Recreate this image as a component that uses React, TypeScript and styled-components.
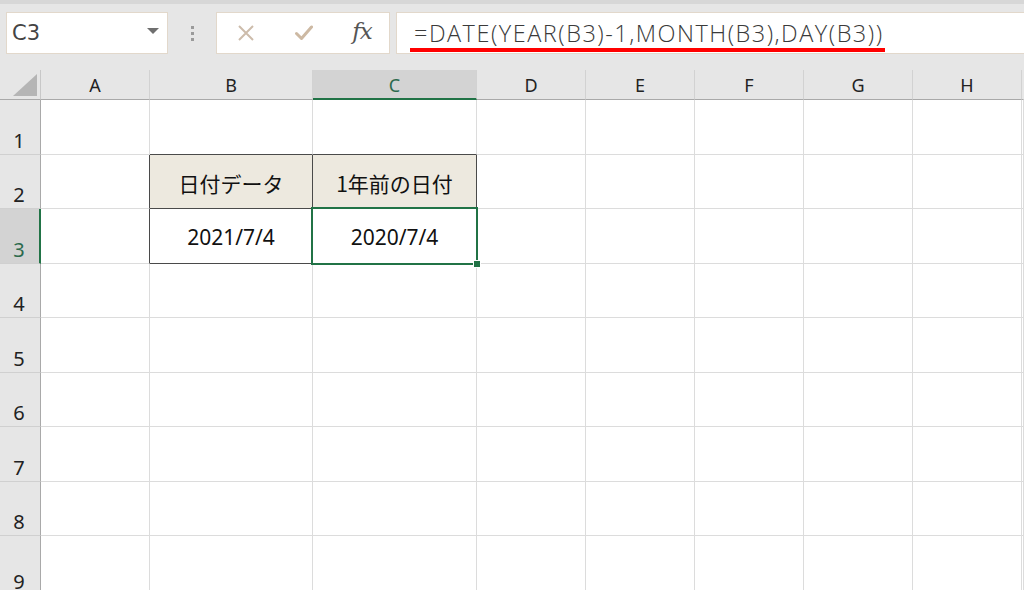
import React from 'react';
import styled, { createGlobalStyle } from 'styled-components';

const Global = createGlobalStyle`
  html, body { margin: 0; padding: 0; background: #ffffff; overflow: hidden; }
  body { font-family: "Noto Sans", "Noto Sans CJK JP", sans-serif; }
  #root { width: 1024px; height: 590px; }
`;

const GREEN = '#217346';
const GRID = '#dcdcdc';
const DARK = '#4a4a4a';

const Page = styled.div`
  width: 1024px;
  height: 590px;
  display: flex;
  flex-direction: column;
  overflow: hidden;
`;

const TopBar = styled.div`
  flex: none;
  height: 70px;
  box-sizing: border-box;
  background: #e6e6e6;
  border-top: 4px solid #d7d7d7;
  display: flex;
  align-items: flex-start;
  padding: 8px 0 0 6px;
`;

const Box = styled.div<{ $w?: number; $grow?: boolean }>`
  box-sizing: border-box;
  height: 42px;
  width: ${p => (p.$w ? `${p.$w}px` : 'auto')};
  flex: ${p => (p.$grow ? '1 1 auto' : 'none')};
  background: #ffffff;
  border: 1px solid #e2d8cb;
  border-right: ${p => (p.$grow ? 'none' : '1px solid #e2d8cb')};
  display: flex;
  align-items: center;
`;

const NameText = styled.span`
  font-family: "DejaVu Sans", sans-serif;
  font-size: 21px;
  color: #444444;
  padding-left: 5px;
  flex: 1;
`;

const Caret = styled.span`
  width: 0;
  height: 0;
  border-left: 6px solid transparent;
  border-right: 6px solid transparent;
  border-top: 6px solid #6f6f6f;
  margin-right: 8px;
  margin-top: -4px;
`;

const Grip = styled.div`
  width: 48px;
  height: 42px;
  flex: none;
  display: flex;
  flex-direction: column;
  align-items: center;
  justify-content: center;
  gap: 3px;
`;

const GripDot = styled.span`
  width: 3px;
  height: 3px;
  background: #9a9a9a;
`;

const FxGrid = styled.div`
  display: grid;
  grid-template-columns: 58px 58px 58px;
  align-items: center;
  justify-items: center;
  width: 100%;
`;

const FxText = styled.span`
  font-family: "DejaVu Serif", "Liberation Serif", serif;
  font-style: italic;
  font-size: 23px;
  color: #555555;
  letter-spacing: -1px;
  margin-top: -4px;
`;

const Gap = styled.div`
  width: 6px;
  flex: none;
`;

const FormulaWrap = styled.div`
  align-self: stretch;
  display: flex;
  align-items: flex-end;
  padding-left: 13px;
`;

const Formula = styled.span`
  font-family: "Open Sans", "Noto Sans", sans-serif;
  font-weight: 300;
  font-size: 23.5px;
  letter-spacing: 1.5px;
  color: #3a3a3a;
  line-height: 26px;
  padding: 0 1px 2px 4px;
  border-bottom: 4px solid #ff0000;
  margin-bottom: 1px;
`;

const Sheet = styled.div`
  display: grid;
  grid-template-columns: 41px 109px 163px 164px 109px 109px 109px 109px 109px 2px;
  grid-template-rows: 30px 55px 54px 55px 54px 55px 54px 55px 54px 60px;
  background: #ffffff;
`;

const ColHead = styled.div<{ $sel?: boolean; $first?: boolean }>`
  box-sizing: border-box;
  background: ${p => (p.$sel ? '#d3d3d3' : '#e6e6e6')};
  border-right: 1px solid ${p => (p.$first ? '#e6e6e6' : '#d2d2d2')};
  border-bottom: ${p => (p.$sel ? `2px solid ${GREEN}` : '1px solid #a9a9a9')};
  display: flex;
  align-items: center;
  justify-content: center;
  font-family: "Noto Sans", sans-serif;
  font-size: 18px;
  color: ${p => (p.$sel ? '#2c6a4d' : '#222222')};
  padding-top: ${p => (p.$sel ? '1px' : '0')};
`;

const Corner = styled.div`
  box-sizing: border-box;
  background: #e6e6e6;
  border-right: 1px solid #c8c8c8;
  border-bottom: 1px solid #a9a9a9;
  display: flex;
  align-items: flex-end;
  justify-content: flex-end;
  padding: 0 3px 3px 0;
`;

const RowHead = styled.div<{ $sel?: boolean }>`
  box-sizing: border-box;
  background: ${p => (p.$sel ? '#d3d3d3' : '#e6e6e6')};
  border-right: ${p => (p.$sel ? `2px solid ${GREEN}` : '1px solid #a9a9a9')};
  border-bottom: 1px solid #d0d0d0;
  display: flex;
  align-items: flex-end;
  justify-content: center;
  padding-bottom: 3px;
  padding-right: ${p => (p.$sel ? '1px' : '2px')};
  font-family: "Noto Sans", sans-serif;
  font-size: 20px;
  line-height: 20px;
  color: ${p => (p.$sel ? '#2c6a4d' : '#222222')};
`;

const Cell = styled.div<{ $r?: string; $b?: string; $fill?: string; $jp?: boolean }>`
  box-sizing: border-box;
  position: relative;
  background: ${p => p.$fill || '#ffffff'};
  border-right: 1px solid ${p => p.$r || GRID};
  border-bottom: 1px solid ${p => p.$b || GRID};
  display: flex;
  align-items: center;
  justify-content: center;
  padding-top: 2px;
  font-family: ${p => (p.$jp ? '"Noto Sans CJK JP", "Noto Sans", sans-serif' : '"Noto Sans", "Noto Sans CJK JP", sans-serif')};
  font-size: 21px;
  color: #111111;
`;

const Selection = styled.div`
  position: absolute;
  z-index: 5;
  left: -2px;
  top: -2px;
  right: -2px;
  bottom: -2px;
  border: 2px solid ${GREEN};
  pointer-events: none;
`;

const FillHandle = styled.div`
  position: absolute;
  right: -5px;
  bottom: -5px;
  width: 6px;
  height: 6px;
  background: ${GREEN};
  border: 1px solid #ffffff;
`;

const cols = ['A', 'B', 'C', 'D', 'E', 'F', 'G', 'H'];
const HEAD_FILL = '#ede9df';

type CellSpec = { text?: string; r?: string; b?: string; fill?: string; jp?: boolean; sel?: boolean };

function cellSpec(row: number, col: number): CellSpec {
  const s: CellSpec = {};
  const inTable = (row === 2 || row === 3) && (col === 1 || col === 2);
  if (inTable) {
    s.r = DARK;
    s.b = DARK;
  }
  if ((row === 2 || row === 3) && col === 0) s.r = DARK;
  if (row === 1 && (col === 1 || col === 2)) s.b = DARK;
  if (row === 2 && col === 1) { s.text = '日付データ'; s.fill = HEAD_FILL; s.jp = true; }
  if (row === 2 && col === 2) { s.text = '1年前の日付'; s.fill = HEAD_FILL; s.jp = true; }
  if (row === 3 && col === 1) s.text = '2021/7/4';
  if (row === 3 && col === 2) { s.text = '2020/7/4'; s.sel = true; }
  return s;
}

const XIcon = () => (
  <svg width="18" height="18" viewBox="0 0 18 18">
    <path d="M2 2 L16 16 M16 2 L2 16" stroke="#cdbcab" strokeWidth="2" fill="none" />
  </svg>
);

const CheckIcon = () => (
  <svg width="18" height="16" viewBox="0 0 18 16">
    <path d="M1.5 8.5 L6.5 13.5 L16.5 2" stroke="#cdb9a3" strokeWidth="3" fill="none" strokeLinecap="round" strokeLinejoin="round" />
  </svg>
);

const CornerTriangle = () => (
  <svg width="24" height="22" viewBox="0 0 24 22">
    <polygon points="0,22 24,0 24,22" fill="#b5b5b5" />
  </svg>
);

export default function App() {
  const rows = [1, 2, 3, 4, 5, 6, 7, 8, 9, 10];
  return (
    <Page>
      <Global />
      <TopBar>
        <Box $w={162}>
          <NameText>C3</NameText>
          <Caret />
        </Box>
        <Grip>
          <GripDot />
          <GripDot />
          <GripDot />
        </Grip>
        <Box $w={174}>
          <FxGrid>
            <XIcon />
            <CheckIcon />
            <FxText>fx</FxText>
          </FxGrid>
        </Box>
        <Gap />
        <Box $grow>
          <FormulaWrap>
            <Formula>=DATE(YEAR(B3)-1,MONTH(B3),DAY(B3))</Formula>
          </FormulaWrap>
        </Box>
      </TopBar>
      <Sheet>
        <Corner>
          <CornerTriangle />
        </Corner>
        {cols.map(c => (
          <ColHead key={c} $sel={c === 'C'}>
            {c}
          </ColHead>
        ))}
        <ColHead $first />
        {rows.map(r => (
          <React.Fragment key={r}>
            <RowHead $sel={r === 3}>{r <= 9 ? r : ''}</RowHead>
            {cols.map((c, ci) => {
              const s = cellSpec(r, ci);
              return (
                <Cell key={c} $r={s.r} $b={s.b} $fill={s.fill} $jp={s.jp}>
                  {s.text}
                  {s.sel && (
                    <Selection>
                      <FillHandle />
                    </Selection>
                  )}
                </Cell>
              );
            })}
            <Cell />
          </React.Fragment>
        ))}
      </Sheet>
    </Page>
  );
}
